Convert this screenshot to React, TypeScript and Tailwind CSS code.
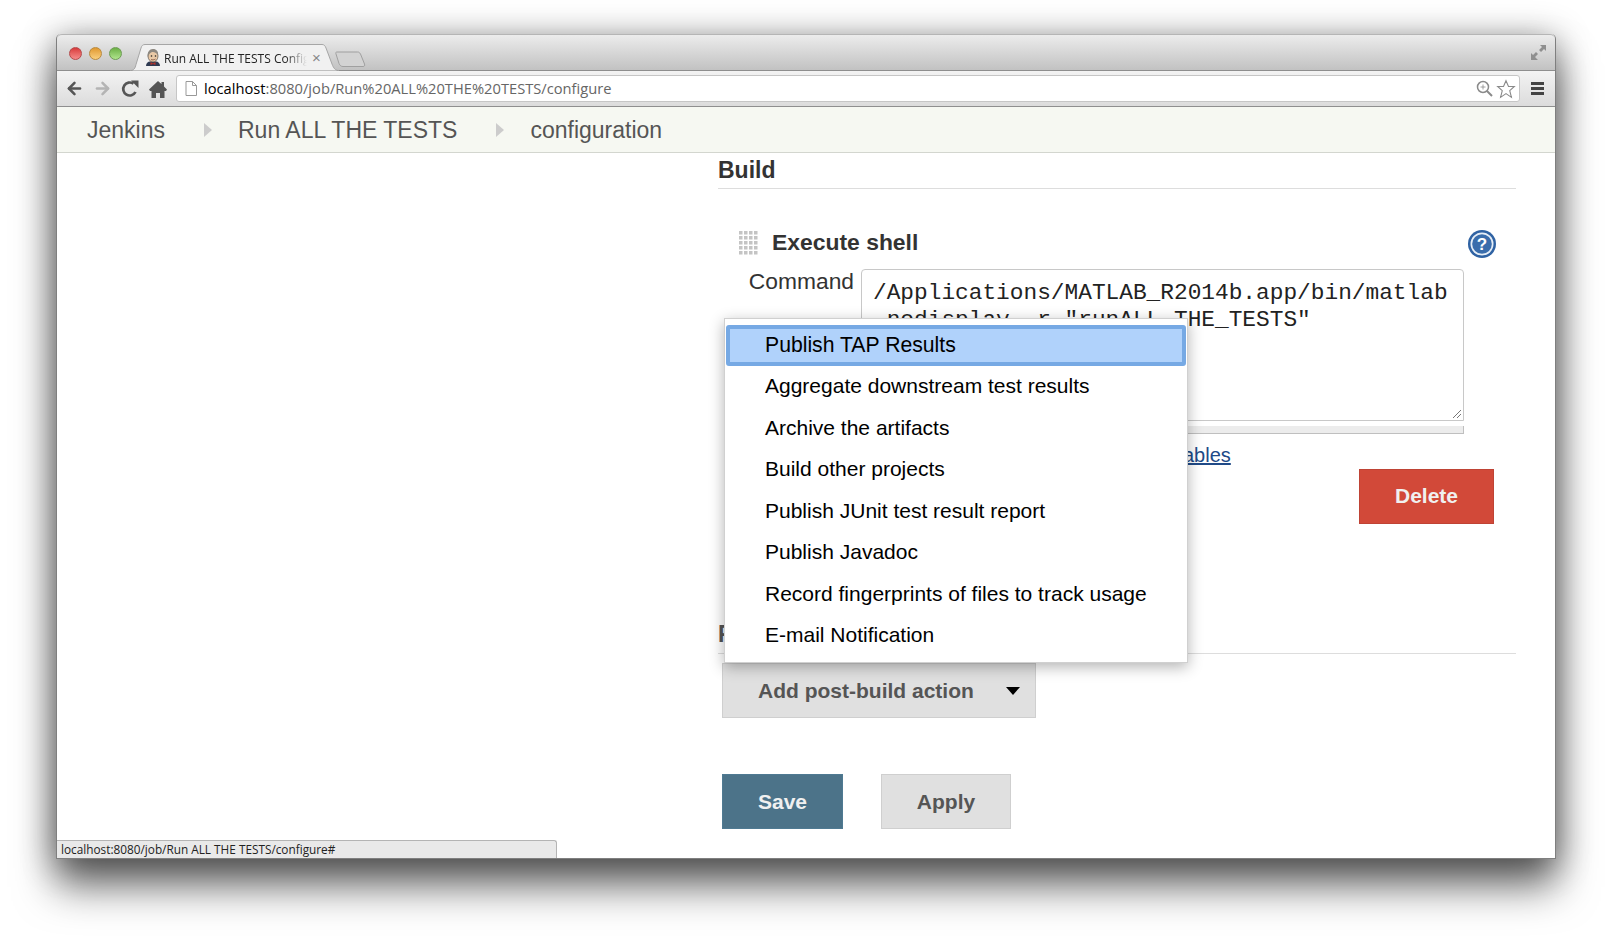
import { ArrowLeft, ArrowRight } from 'lucide-react';

const menuItems = [
  'Aggregate downstream test results',
  'Archive the artifacts',
  'Build other projects',
  'Publish JUnit test result report',
  'Publish Javadoc',
  'Record fingerprints of files to track usage',
  'E-mail Notification',
];

function TrafficLight({ color }: { color: string }) {
  return <span className={`w-[13px] h-[13px] rounded-full border ${color}`} />;
}

function JenkinsIcon() {
  return (
    <svg width="16" height="17" viewBox="0 0 16 17" className="shrink-0">
      <path d="M1 17c0-3 2-4.500 4-4.500h6c2 0 4 1.500 4 4.500z" fill="#2f3a52" />
      <path d="M5.500 13l2.500 1.500 2.500-1.500v3l-2.500-1-2.500 1z" fill="#b8322a" />
      <ellipse cx="8" cy="7" rx="5" ry="6" fill="#e9c9a6" stroke="#5a5048" strokeWidth="0.700" />
      <path d="M2.800 8C2 3 4.500 0 8 0s5.500 2.500 5 6c-2-2.500-4-3.500-6-3S4 5.500 2.800 8z" fill="#8d8880" />
      <circle cx="6.500" cy="7" r="0.800" fill="#222" />
      <circle cx="10.500" cy="7" r="0.800" fill="#222" />
      <path d="M6 10.500c1.200.7 3 .5 4.500-.5" stroke="#7a4a3a" strokeWidth="0.800" fill="none" />
    </svg>
  );
}

function DragHandle() {
  return (
    <svg width="21" height="25" viewBox="0 0 21 25" className="shrink-0">
      {[0, 1, 2, 3, 4].map((row) =>
        [0, 1, 2, 3].map((col) => (
          <rect key={`${row}-${col}`} x={col * 5 + 1} y={row * 5 + 1} width="3.500" height="3.500" fill="#c4c4c4" />
        )),
      )}
    </svg>
  );
}

function HelpIcon() {
  return (
    <svg width="30" height="30" viewBox="0 0 30 30">
      <circle cx="15" cy="15" r="14" fill="#2f62a3" />
      <circle cx="15" cy="15" r="11.500" fill="#e6eef7" />
      <circle cx="15" cy="15" r="9.800" fill="#3a6dac" />
      <text x="15" y="21" textAnchor="middle" fontSize="17" fontWeight="700" fill="#fff" fontFamily="Liberation Sans, sans-serif">?</text>
    </svg>
  );
}

function TabShape() {
  return (
    <svg width="209" height="27" viewBox="0 0 209 27" className="absolute left-0 top-0">
      <path d="M0 26.500c4 0 5-2 6-6L11 4c.7-2.500 2-3.500 4-3.500h177c2 0 3 1 4 3.500l6 16c1.500 4 3 6.500 7 6.500" fill="#f1f1f1" stroke="#a6a6a6" />
    </svg>
  );
}

export default function App() {
  return (
    <div className="w-[1612px] h-[938px] overflow-hidden bg-white pt-[34px] pl-[56px] font-['Liberation_Sans',Arial,sans-serif]">
      <div className="relative w-[1500px] h-[825px] rounded-t-[5px] flex flex-col bg-white border-x border-b border-[#7f7f7f] shadow-[0_28px_40px_rgba(0,0,0,0.55),0_4px_34px_rgba(0,0,0,0.42)]">
        {/* title bar */}
        <div className="h-[37px] shrink-0 flex rounded-t-[5px] border-t border-[#b5b5b5] border-b border-b-[#8e8e8e] bg-gradient-to-b from-[#ececec] to-[#c2c2c2]">
          <div className="w-[73px] shrink-0 flex items-start gap-[7px] pl-[12px] pt-[12px]">
            <TrafficLight color="bg-gradient-to-b from-[#d8393c] to-[#f58a8a] border-[#b5494a]" />
            <TrafficLight color="bg-gradient-to-b from-[#e0992c] to-[#f9cf7c] border-[#b98a3f]" />
            <TrafficLight color="bg-gradient-to-b from-[#6cb045] to-[#b0e58c] border-[#6d9c54]" />
          </div>
          <div className="relative mt-[9px] h-[27px] w-[209px] shrink-0 flex items-center pl-[15px] text-[#222]">
            <TabShape />
            <span className="relative"><JenkinsIcon /></span>
            <span className="relative ml-[3px] pt-[2px] w-[143px] overflow-hidden whitespace-nowrap font-['Open_Sans',sans-serif] text-[12px] [mask-image:linear-gradient(to_right,black_85%,transparent)]">Run ALL THE TESTS Config</span>
            <span className="relative text-[#888] text-[15px] ml-[5px] leading-none">×</span>
          </div>
          <svg width="32" height="17" viewBox="0 0 32 17" className="mt-[16px] -ml-[4px] shrink-0">
            <path d="M1.500 1h21c1.500 0 2 .5 3 2l4 10c.5 1.500 0 2.500-1.500 2.500H8c-2 0-3-1-4-3L1 3c-.5-1 0-2 .5-2z" fill="#d3d3d3" stroke="#a0a0a0" />
          </svg>
          <div className="ml-auto mr-[9px] mt-[10px]">
            <svg width="15" height="15" viewBox="0 0 15 15" fill="#8f8f8f">
              <path d="M9 0h6v6l-2-2-3 3-2-2 3-3zM0 15V8l2 2 3-3 2 2-3 3 3 3z" />
            </svg>
          </div>
        </div>

        {/* toolbar */}
        <div className="h-[36px] shrink-0 flex items-center border-b border-[#8f8f8f] bg-gradient-to-b from-[#f3f3f3] to-[#dcdcdc] pl-[8px] pr-[8px]">
          <ArrowLeft size={19} strokeWidth={3.200} className="text-[#555]" />
          <ArrowRight size={19} strokeWidth={3.200} className="text-[#b4b4b4] ml-[9px]" />
          <svg width="18" height="18" viewBox="0 0 18 18" className="ml-[9px]">
            <path d="M14.500 12A6.500 6.500 0 1 1 12.500 3.700" fill="none" stroke="#555" strokeWidth="2.700" />
            <path d="M10 .5h7.500V8z" fill="#555" />
          </svg>
          <svg width="18" height="18" viewBox="0 0 18 18" fill="#555" className="ml-[10px]">
            <path d="M9 1l3.500 3V2H15v4.500l3 3-1 1.500H15.500v7H11v-5H7v5H2.500v-7H1L0 9.500z" />
          </svg>
          <div className="ml-[9px] flex-1 h-[27px] flex items-center rounded-[3px] border border-[#c6c6c6] bg-white pl-[8px] pr-[3px]">
            <svg width="12" height="15" viewBox="0 0 12 15" fill="#fff" stroke="#999" className="mr-[7px]">
              <path d="M1 .5h6.500l4 4v10H1zM7.500.5v4h4" />
            </svg>
            <span className="text-black font-['Open_Sans',sans-serif] text-[14.700px]">localhost</span>
            <span className="text-[#666] font-['Open_Sans',sans-serif] text-[14.700px]">:8080/job/Run%20ALL%20THE%20TESTS/configure</span>
            <svg width="17" height="17" viewBox="0 0 17 17" fill="none" stroke="#8a8a8a" className="ml-auto mr-[3px]">
              <circle cx="7" cy="7" r="5.500" strokeWidth="1.500" />
              <path d="M11 11l5 5" strokeWidth="2" />
              <path d="M4.500 7h5M7 4.500v5" strokeWidth="0.800" />
            </svg>
            <svg width="20" height="20" viewBox="0 0 24 24" fill="none" stroke="#8a8a8a" strokeWidth="1.300">
              <path d="M12 2l3 7h7l-5.500 5 2 8-6.500-4.500L5.500 22l2-8L2 9h7z" />
            </svg>
          </div>
          <div className="ml-[11px] mr-[3px] flex flex-col gap-[2px]">
            <span className="block w-[13px] h-[3px] bg-[#444]" />
            <span className="block w-[13px] h-[3px] bg-[#444]" />
            <span className="block w-[13px] h-[3px] bg-[#444]" />
          </div>
        </div>

        {/* breadcrumbs */}
        <div className="h-[46px] shrink-0 flex items-center bg-[#f6f8f2] border-b border-[#d3d6cf] pl-[30px] pt-[1px] text-[23px] text-[#555]">
          <span>Jenkins</span>
          <span className="ml-[39px] mr-[26px] w-0 h-0 border-y-[7px] border-y-transparent border-l-[8px] border-l-[#cccccc]" />
          <span>Run ALL THE TESTS</span>
          <span className="ml-[39px] mr-[26px] w-0 h-0 border-y-[7px] border-y-transparent border-l-[8px] border-l-[#cccccc]" />
          <span>configuration</span>
        </div>

        {/* form */}
        <div className="flex-1 min-h-0 pl-[661px] pr-[39px] flex flex-col text-[#333]">
          <div className="h-[36px] flex items-center border-b border-[#dddddd] text-[23px] font-bold">Build</div>

          <div className="mt-[37px] flex items-center pl-[20px] pr-[19px] h-[34px]">
            <span className="-mt-[1px]"><DragHandle /></span>
            <span className="ml-[13px] pb-[2px] text-[22.900px] font-bold">Execute shell</span>
            <span className="ml-auto mt-[1px]"><HelpIcon /></span>
          </div>

          <div className="flex mt-[9px]">
            <div className="w-[143px] text-right pr-[7px] -mt-[2px] text-[22.800px] leading-[28px] text-[#333] shrink-0">Command</div>
            <div className="w-[603px] shrink-0">
              <div className="relative h-[152px] rounded-t-[4px] border border-[#c8c8c8] bg-white pl-[11px] pt-[10px] font-['Liberation_Mono',monospace] text-[22.800px] leading-[26.500px] text-[#222] whitespace-nowrap">
                <div>/Applications/MATLAB_R2014b.app/bin/matlab</div>
                <div>-nodisplay -r "runALL_THE_TESTS"</div>
                <svg width="10" height="10" viewBox="0 0 10 10" className="absolute right-[1px] bottom-[1px]" stroke="#777">
                  <path d="M1 9l8-8M5 9l4-4" />
                </svg>
              </div>
              <div className="mt-[5px] h-[8px] bg-[#ececec] border-r border-b border-[#bfbfbf]" />
            </div>
          </div>

          <div className="pl-[465px] mt-[8px] h-[26px] text-[20px] leading-[26px] text-[#204a87] underline">ables</div>

          <div className="flex justify-end pr-[22px] mt-[1px]">
            <button className="w-[135px] h-[55px] pb-[2px] bg-[#d24939] border border-[#bf4335] text-[#f0f0f0] text-[21px] font-bold">Delete</button>
          </div>

          <div className="mt-[129px] border-b border-[#dddddd] h-[0px]" />

          <div className="ml-[4px] mt-[9px] w-[314px] h-[55px] shrink-0 flex items-center bg-[#e0e0e0] border border-[#cfcfcf] text-[#555] text-[21px] font-bold pl-[35px]">
            <span>Add post-build action</span>
            <span className="ml-auto mr-[15px] w-0 h-0 border-x-[7px] border-x-transparent border-t-[8px] border-t-black" />
          </div>

          <div className="ml-[4px] mt-[56px] flex gap-[38px]">
            <button className="w-[121px] h-[55px] bg-[#4c7389] border border-[#4f7a92] text-[#f0f0f0] text-[21px] font-bold">Save</button>
            <button className="w-[130px] h-[55px] bg-[#e0e0e0] border border-[#cfcfcf] text-[#555] text-[21px] font-bold">Apply</button>
          </div>
        </div>

        {/* start of the next section title, showing beside the menu */}
        <span className="absolute left-[661px] top-[589px] text-[23px] font-bold text-[#555] leading-none">F</span>

        {/* status bubble */}
        <div className="absolute left-0 bottom-0 w-[500px] h-[18px] flex items-center rounded-tr-[3px] border-t border-r border-[#b4b4b4] bg-[#e9e9e9] pl-[4px] text-[11.800px] text-[#222] font-['Open_Sans',sans-serif]">
          localhost:8080/job/Run ALL THE TESTS/configure#
        </div>

        {/* dropdown menu */}
        <div className="absolute left-[667px] top-[284px] w-[464px] h-[345px] bg-white border border-[#d0d0d0] shadow-[0_4px_14px_rgba(0,0,0,0.3)] text-[21px] text-black pt-[6px]">
          <div className="mx-[1px] h-[41px] flex items-center rounded-[3px] bg-[#b0d2fb] border-[4px] border-[#76a9e4] pl-[35px] pb-[1px] text-[21.200px]">Publish TAP Results</div>
          <div className="-mt-[1px]">
            {menuItems.map((item) => (
              <div key={item} className="h-[41.500px] flex items-center pl-[40px]">{item}</div>
            ))}
          </div>
        </div>
      </div>
    </div>
  );
}
